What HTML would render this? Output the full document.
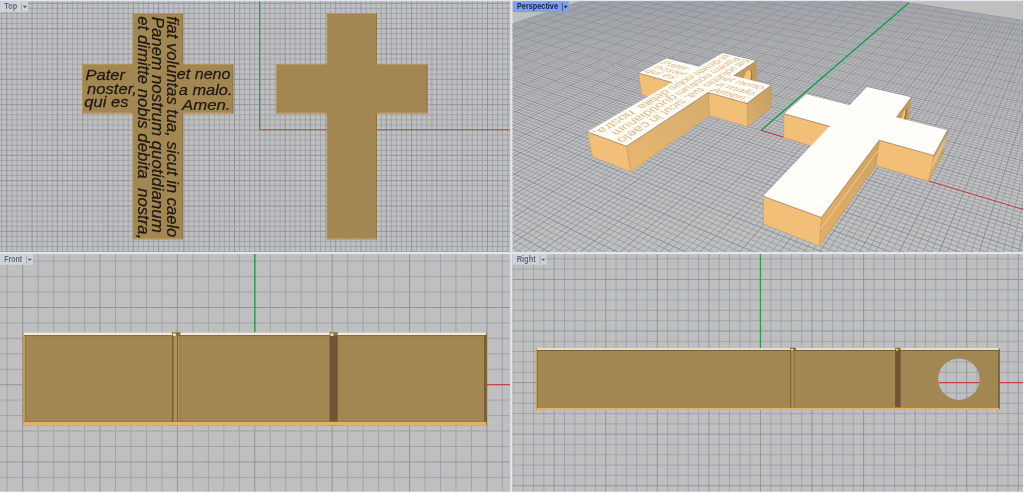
<!DOCTYPE html>
<html><head><meta charset="utf-8"><title>Rhino viewports</title>
<style>html,body{margin:0;padding:0;background:#fff}body{width:1024px;height:494px;overflow:hidden;position:relative}</style>
</head><body>
<svg width="1024" height="494" viewBox="0 0 1024 494" style="position:absolute;left:0;top:0;filter:blur(0.35px)"><defs>
<clipPath id="ct"><rect x="0" y="1.2" width="510.2" height="250.8"/></clipPath>
<clipPath id="cp"><rect x="512.5" y="1.2" width="510.5" height="250.8"/></clipPath>
<clipPath id="cf"><rect x="0" y="254.1" width="510.2" height="237.6"/></clipPath>
<clipPath id="cr"><rect x="512.5" y="254.1" width="510.5" height="237.6"/></clipPath>
<linearGradient id="gR1" x1="0" y1="1" x2="1" y2="0"><stop offset="0" stop-color="#e9b76b"/><stop offset="0.5" stop-color="#deb270"/><stop offset="1" stop-color="#d6ac6c"/></linearGradient>
<linearGradient id="gR1b" x1="0" y1="1" x2="1" y2="0"><stop offset="0" stop-color="#e3af65"/><stop offset="0.5" stop-color="#daa963"/><stop offset="1" stop-color="#d2a360"/></linearGradient>
<linearGradient id="gR2" x1="0" y1="1" x2="1" y2="0"><stop offset="0" stop-color="#deb06a"/><stop offset="1" stop-color="#c49d62"/></linearGradient>
</defs>
<rect x="0" y="0" width="1024" height="494" fill="#ffffff"/>
<rect x="0" y="0" width="1023" height="491.7" fill="#e2e6ef"/>
<rect x="0" y="1.2" width="510.2" height="250.8" fill="#bfbfbf"/>
<rect x="512.5" y="1.2" width="510.5" height="250.8" fill="#bfbfbf"/>
<rect x="0" y="254.1" width="510.2" height="237.6" fill="#bfbfbf"/>
<rect x="512.5" y="254.1" width="510.5" height="237.6" fill="#bfbfbf"/>
<g clip-path="url(#ct)">
<path d="M1.74 1.2V252M11.86 1.2V252M16.92 1.2V252M21.98 1.2V252M27.04 1.2V252M37.16 1.2V252M42.22 1.2V252M47.28 1.2V252M52.34 1.2V252M62.46 1.2V252M67.52 1.2V252M72.58 1.2V252M77.64 1.2V252M87.76 1.2V252M92.82 1.2V252M97.88 1.2V252M102.94 1.2V252M113.06 1.2V252M118.12 1.2V252M123.18 1.2V252M128.24 1.2V252M138.36 1.2V252M143.42 1.2V252M148.48 1.2V252M153.54 1.2V252M163.66 1.2V252M168.72 1.2V252M173.78 1.2V252M178.84 1.2V252M188.96 1.2V252M194.02 1.2V252M199.08 1.2V252M204.14 1.2V252M214.26 1.2V252M219.32 1.2V252M224.38 1.2V252M229.44 1.2V252M239.56 1.2V252M244.62 1.2V252M249.68 1.2V252M254.74 1.2V252M264.86 1.2V252M269.92 1.2V252M274.98 1.2V252M280.04 1.2V252M290.16 1.2V252M295.22 1.2V252M300.28 1.2V252M305.34 1.2V252M315.46 1.2V252M320.52 1.2V252M325.58 1.2V252M330.64 1.2V252M340.76 1.2V252M345.82 1.2V252M350.88 1.2V252M355.94 1.2V252M366.06 1.2V252M371.12 1.2V252M376.18 1.2V252M381.24 1.2V252M391.36 1.2V252M396.42 1.2V252M401.48 1.2V252M406.54 1.2V252M416.66 1.2V252M421.72 1.2V252M426.78 1.2V252M431.84 1.2V252M441.96 1.2V252M447.02 1.2V252M452.08 1.2V252M457.14 1.2V252M467.26 1.2V252M472.32 1.2V252M477.38 1.2V252M482.44 1.2V252M492.56 1.2V252M497.62 1.2V252M502.68 1.2V252M507.74 1.2V252M0 8.39H510.2M0 13.46H510.2M0 18.53H510.2M0 23.59H510.2M0 33.73H510.2M0 38.79H510.2M0 43.86H510.2M0 48.93H510.2M0 59.06H510.2M0 64.13H510.2M0 69.2H510.2M0 74.26H510.2M0 84.4H510.2M0 89.46H510.2M0 94.53H510.2M0 99.6H510.2M0 109.73H510.2M0 114.8H510.2M0 119.87H510.2M0 124.93H510.2M0 135.07H510.2M0 140.13H510.2M0 145.2H510.2M0 150.27H510.2M0 160.4H510.2M0 165.47H510.2M0 170.54H510.2M0 175.6H510.2M0 185.74H510.2M0 190.8H510.2M0 195.87H510.2M0 200.94H510.2M0 211.07H510.2M0 216.14H510.2M0 221.21H510.2M0 226.27H510.2M0 236.41H510.2M0 241.47H510.2M0 246.54H510.2M0 251.61H510.2" stroke="#949aa3" stroke-width="0.7" fill="none"/>
<path d="M6.8 1.2V252M32.1 1.2V252M57.4 1.2V252M82.7 1.2V252M108 1.2V252M133.3 1.2V252M158.6 1.2V252M183.9 1.2V252M209.2 1.2V252M234.5 1.2V252M259.8 1.2V252M285.1 1.2V252M310.4 1.2V252M335.7 1.2V252M361 1.2V252M386.3 1.2V252M411.6 1.2V252M436.9 1.2V252M462.2 1.2V252M487.5 1.2V252M0 3.32H510.2M0 28.66H510.2M0 54H510.2M0 79.33H510.2M0 104.66H510.2M0 130H510.2M0 155.34H510.2M0 180.67H510.2M0 206H510.2M0 231.34H510.2" stroke="#878d96" stroke-width="0.8" fill="none"/>
</g>
<g clip-path="url(#ct)">
<path d="M259.6 129.7V1.2" stroke="#1f9e55" stroke-width="1.3"/>
<path d="M259.6 129.7H510.2" stroke="#c0484a" stroke-width="1.1"/>
<path d="M132.6 238.9Q132.6 239.4 133.1 239.4L182.25 239.4Q182.75 239.4 182.75 238.9L182.75 114.9Q182.75 113.5 184.15 113.5L232.7 113.5Q233.2 113.5 233.2 113L233.2 64.6Q233.2 64.1 232.7 64.1L184.15 64.1Q182.75 64.1 182.75 62.7L182.75 13.7Q182.75 13.2 182.25 13.2L133.1 13.2Q132.6 13.2 132.6 13.7L132.6 62.7Q132.6 64.1 131.2 64.1L82.5 64.1Q82 64.1 82 64.6L82 113Q82 113.5 82.5 113.5L131.2 113.5Q132.6 113.5 132.6 114.9Z" fill="#a38753"/>
<path d="M82.5 113.1H131.4" stroke="#cda560" stroke-width="0.9"/>
<path d="M183.95 113.1H232.7" stroke="#cda560" stroke-width="0.9"/>
<path d="M133.1 239H182.25" stroke="#cda560" stroke-width="0.9"/>
<path d="M232.8 64.6V113" stroke="#8a7142" stroke-width="0.9"/>
<path d="M182.35 13.7V62.9" stroke="#8a7142" stroke-width="0.9"/>
<path d="M182.35 114.7V238.9" stroke="#8a7142" stroke-width="0.9"/>
<path d="M82.4 64.6V113" stroke="#b8975b" stroke-width="0.8"/>
<path d="M133 13.7V62.9" stroke="#b8975b" stroke-width="0.8"/>
<path d="M133 114.7V238.9" stroke="#b8975b" stroke-width="0.8"/>
<path d="M82.5 64.5H131.4" stroke="#b8975b" stroke-width="0.8"/>
<path d="M183.95 64.5H232.7" stroke="#b8975b" stroke-width="0.8"/>
<path d="M133.1 13.6H182.25" stroke="#b8975b" stroke-width="0.8"/>
<path d="M326.8 238.9Q326.8 239.4 327.3 239.4L376.3 239.4Q376.8 239.4 376.8 238.9L376.8 114.9Q376.8 113.5 378.2 113.5L427 113.5Q427.5 113.5 427.5 113L427.5 64.6Q427.5 64.1 427 64.1L378.2 64.1Q376.8 64.1 376.8 62.7L376.8 13.7Q376.8 13.2 376.3 13.2L327.3 13.2Q326.8 13.2 326.8 13.7L326.8 62.7Q326.8 64.1 325.4 64.1L276.7 64.1Q276.2 64.1 276.2 64.6L276.2 113Q276.2 113.5 276.7 113.5L325.4 113.5Q326.8 113.5 326.8 114.9Z" fill="#a38753"/>
<path d="M276.7 113.1H325.6" stroke="#cda560" stroke-width="0.9"/>
<path d="M378 113.1H427" stroke="#cda560" stroke-width="0.9"/>
<path d="M327.3 239H376.3" stroke="#cda560" stroke-width="0.9"/>
<path d="M427.1 64.6V113" stroke="#8a7142" stroke-width="0.9"/>
<path d="M376.4 13.7V62.9" stroke="#8a7142" stroke-width="0.9"/>
<path d="M376.4 114.7V238.9" stroke="#8a7142" stroke-width="0.9"/>
<path d="M276.6 64.6V113" stroke="#b8975b" stroke-width="0.8"/>
<path d="M327.2 13.7V62.9" stroke="#b8975b" stroke-width="0.8"/>
<path d="M327.2 114.7V238.9" stroke="#b8975b" stroke-width="0.8"/>
<path d="M276.7 64.5H325.6" stroke="#b8975b" stroke-width="0.8"/>
<path d="M378 64.5H427" stroke="#b8975b" stroke-width="0.8"/>
<path d="M327.3 13.6H376.3" stroke="#b8975b" stroke-width="0.8"/>
<g style="font-family:'Liberation Sans',Arial,sans-serif;font-style:italic;font-size:15.5px;fill:#1e1a12;stroke:#1e1a12;stroke-width:0.25">
<text transform="translate(85.4 80.2) scale(1.0700 1)" style="font-size:15.5px" xml:space="preserve">Pater</text>
<text transform="translate(87.1 93.8) scale(1.0700 1)" style="font-size:15.5px" xml:space="preserve">noster,</text>
<text transform="translate(84.2 107.2) scale(1.0700 1)" style="font-size:15.5px" xml:space="preserve">qui es</text>
<text transform="translate(176.8 79.3) scale(1.0400 1)" style="font-size:15.5px" xml:space="preserve">et neno</text>
<text transform="translate(178.8 95.4) scale(1.0580 1)" style="font-size:15.5px" xml:space="preserve">a malo.</text>
<text transform="translate(182.0 110.1) scale(1.0830 1)" style="font-size:15.5px" xml:space="preserve">Amen.</text>
<text transform="translate(166.6 16.3) rotate(90) scale(1.0238 1)" style="font-size:16.2px" xml:space="preserve">fiat voluntas tua, sicut in caelo</text>
<text transform="translate(152.4 16.7) rotate(90) scale(1.0439 1)" style="font-size:16.2px" xml:space="preserve">Panem nostrum quotidianum</text>
<text transform="translate(137.6 16.3) rotate(90) scale(1.0324 1)" style="font-size:16.2px" xml:space="preserve">et dimitte nobis debita  nostra,</text>
</g>
</g>
<rect x="0" y="1.2" width="28" height="10.8" fill="#ced3da"/>
<text x="4.2" y="9.2" style="font-family:'Liberation Sans',sans-serif;font-size:8.6px;font-weight:bold;fill:#666b73" textLength="13" lengthAdjust="spacingAndGlyphs">Top</text>
<path d="M21.6 2.7V11" stroke="#9a9fa8" stroke-width="0.8"/>
<path d="M22.8 5.8H26.8L24.8 8.2Z" fill="#55595f"/>
<g clip-path="url(#cf)">
<path d="M7.2 254.1V491.7M38.15 254.1V491.7M53.63 254.1V491.7M69.1 254.1V491.7M84.58 254.1V491.7M115.53 254.1V491.7M131 254.1V491.7M146.48 254.1V491.7M161.95 254.1V491.7M192.9 254.1V491.7M208.38 254.1V491.7M223.85 254.1V491.7M239.33 254.1V491.7M270.28 254.1V491.7M285.75 254.1V491.7M301.23 254.1V491.7M316.7 254.1V491.7M347.65 254.1V491.7M363.12 254.1V491.7M378.6 254.1V491.7M394.08 254.1V491.7M425.02 254.1V491.7M440.5 254.1V491.7M455.98 254.1V491.7M471.45 254.1V491.7M502.4 254.1V491.7M0 261.18H510.2M0 276.62H510.2M0 292.06H510.2M0 322.94H510.2M0 338.38H510.2M0 353.82H510.2M0 369.26H510.2M0 400.14H510.2M0 415.58H510.2M0 431.02H510.2M0 446.46H510.2M0 477.34H510.2" stroke="#949aa3" stroke-width="0.7" fill="none"/>
<path d="M22.68 254.1V491.7M100.05 254.1V491.7M177.43 254.1V491.7M254.8 254.1V491.7M332.18 254.1V491.7M409.55 254.1V491.7M486.93 254.1V491.7M0 307.5H510.2M0 384.7H510.2M0 461.9H510.2" stroke="#878d96" stroke-width="0.8" fill="none"/>
</g>
<g clip-path="url(#cf)">
<path d="M254.8 384.6V254.1" stroke="#1f9e55" stroke-width="1.3"/>
<path d="M254.8 384.6H510.2" stroke="#c0484a" stroke-width="1.1"/>
<rect x="22.8" y="332.6" width="464" height="92.8" rx="1.2" fill="#a38753"/>
<rect x="22.8" y="333.6" width="2.6" height="90.8" fill="#c29a52"/>
<rect x="25.4" y="333.6" width="0.8" height="90.8" fill="#8d7443"/>
<rect x="484.1" y="333.6" width="2.7" height="90.8" fill="#755c35"/>
<rect x="171.9" y="332.6" width="8.5" height="92.8" fill="#b29158"/>
<rect x="171.9" y="332.6" width="1.7" height="92.8" fill="#7b6139"/>
<rect x="177" y="332.6" width="0.85" height="92.8" fill="#6f5733"/>
<rect x="179.55" y="332.6" width="0.85" height="92.8" fill="#8d7443"/>
<rect x="329.5" y="332.6" width="8.2" height="92.8" fill="#6e5632"/>
<rect x="23.6" y="332.6" width="462.4" height="2.7" rx="0.8" fill="#f1ede0"/>
<rect x="24.3" y="335.3" width="461" height="0.8" fill="#6d5631"/>
<rect x="24.3" y="421.4" width="461" height="0.7" fill="#8d7443"/>
<rect x="23.4" y="422" width="462.8" height="3.4" rx="1" fill="#e3b266"/>
<rect x="171.9" y="332.2" width="8.5" height="3.3" fill="#8a7040"/>
<rect x="172.7" y="333.2" width="3.4" height="2.7" rx="1" fill="#f4d98a"/>
<rect x="329.5" y="332.2" width="8.2" height="3.3" fill="#8a7040"/>
<rect x="330.3" y="333.2" width="3.28" height="2.7" rx="1" fill="#f4d98a"/>
</g>
<rect x="0" y="254.1" width="33" height="10.7" fill="#ced3da"/>
<text x="4.2" y="262.1" style="font-family:'Liberation Sans',sans-serif;font-size:8.6px;font-weight:bold;fill:#666b73" textLength="18" lengthAdjust="spacingAndGlyphs">Front</text>
<path d="M26.6 255.6V263.8" stroke="#9a9fa8" stroke-width="0.8"/>
<path d="M27.8 258.7H31.8L29.8 261.1Z" fill="#55595f"/>
<g clip-path="url(#cr)">
<path d="M512.89 254.1V491.7M523.21 254.1V491.7M533.52 254.1V491.7M543.84 254.1V491.7M564.47 254.1V491.7M574.78 254.1V491.7M585.1 254.1V491.7M595.41 254.1V491.7M616.04 254.1V491.7M626.36 254.1V491.7M636.67 254.1V491.7M646.99 254.1V491.7M667.62 254.1V491.7M677.93 254.1V491.7M688.25 254.1V491.7M698.56 254.1V491.7M719.19 254.1V491.7M729.5 254.1V491.7M739.82 254.1V491.7M750.13 254.1V491.7M770.77 254.1V491.7M781.08 254.1V491.7M791.4 254.1V491.7M801.71 254.1V491.7M822.34 254.1V491.7M832.66 254.1V491.7M842.97 254.1V491.7M853.29 254.1V491.7M873.92 254.1V491.7M884.23 254.1V491.7M894.55 254.1V491.7M904.86 254.1V491.7M925.49 254.1V491.7M935.81 254.1V491.7M946.12 254.1V491.7M956.44 254.1V491.7M977.07 254.1V491.7M987.38 254.1V491.7M997.7 254.1V491.7M1008.01 254.1V491.7M512.5 258.82H1023M512.5 269.14H1023M512.5 289.77H1023M512.5 300.08H1023M512.5 310.4H1023M512.5 320.71H1023M512.5 341.34H1023M512.5 351.66H1023M512.5 361.97H1023M512.5 372.29H1023M512.5 392.92H1023M512.5 403.23H1023M512.5 413.55H1023M512.5 423.86H1023M512.5 444.49H1023M512.5 454.81H1023M512.5 465.12H1023M512.5 475.44H1023" stroke="#949aa3" stroke-width="0.7" fill="none"/>
<path d="M554.15 254.1V491.7M605.73 254.1V491.7M657.3 254.1V491.7M708.88 254.1V491.7M760.45 254.1V491.7M812.03 254.1V491.7M863.6 254.1V491.7M915.18 254.1V491.7M966.75 254.1V491.7M1018.33 254.1V491.7M512.5 279.45H1023M512.5 331.03H1023M512.5 382.6H1023M512.5 434.18H1023M512.5 485.75H1023" stroke="#878d96" stroke-width="0.8" fill="none"/>
</g>
<g clip-path="url(#cr)">
<path d="M760.45 382.6V254.1" stroke="#1f9e55" stroke-width="1.3"/>
<path d="M760.45 382.6H1023" stroke="#c0484a" stroke-width="1.1"/>
<mask id="hole"><rect x="500" y="300" width="540" height="150" fill="#fff"/><circle cx="958.85" cy="379.2" r="20.7" fill="#000"/></mask>
<g mask="url(#hole)">
<rect x="535.9" y="348.1" width="463.8" height="61.8" rx="1.2" fill="#a38753"/>
<rect x="535.9" y="349.1" width="1.3" height="59.8" fill="#c29a52"/>
<rect x="537.2" y="349.1" width="0.8" height="59.8" fill="#8d7443"/>
<rect x="998.1" y="349.1" width="1.6" height="59.8" fill="#755c35"/>
<rect x="790.1" y="348.1" width="6" height="61.8" fill="#b29158"/>
<rect x="790.1" y="348.1" width="1.2" height="61.8" fill="#7b6139"/>
<rect x="793.7" y="348.1" width="0.7" height="61.8" fill="#6f5733"/>
<rect x="795.5" y="348.1" width="0.6" height="61.8" fill="#8d7443"/>
<rect x="895.1" y="348.1" width="5.5" height="61.8" fill="#6e5632"/>
<rect x="536.7" y="348.1" width="462.2" height="1.9" rx="0.8" fill="#e6dfca"/>
<rect x="537.4" y="350" width="460.8" height="0.8" fill="#6d5631"/>
<rect x="537.4" y="407.2" width="460.8" height="0.7" fill="#8d7443"/>
<rect x="536.5" y="407.8" width="462.6" height="2.1" rx="1" fill="#e3b266"/>
<rect x="790.1" y="347.7" width="6" height="2.5" fill="#8a7040"/>
<rect x="790.9" y="348.7" width="2.4" height="1.9" rx="1" fill="#f4d98a"/>
<rect x="895.1" y="347.7" width="5.5" height="2.5" fill="#8a7040"/>
<rect x="895.9" y="348.7" width="2.2" height="1.9" rx="1" fill="#f4d98a"/>
</g>
</g>
<rect x="512.5" y="254.1" width="34" height="10.5" fill="#ced3da"/>
<text x="516.7" y="262.1" style="font-family:'Liberation Sans',sans-serif;font-size:8.6px;font-weight:bold;fill:#666b73" textLength="19" lengthAdjust="spacingAndGlyphs">Right</text>
<path d="M540.1 255.6V263.6" stroke="#9a9fa8" stroke-width="0.8"/>
<path d="M541.3 258.7H545.3L543.3 261.1Z" fill="#55595f"/>
<g clip-path="url(#cp)">
<defs><path id="gmn" d="M-201.19 262.64L683.42 -31.73M-188.24 255.65L-620.38 -2633.31M-200.88 265.27L685.26 -31.45M-175.23 251.35L-726.11 -2783M-200.57 267.93L687.11 -31.17M-162.49 247.13L-845.55 -2952.1M-200.25 270.63L688.96 -30.88M-150 243L-981.56 -3144.66M-199.61 276.12L692.69 -30.31M-125.73 234.97L-1319.28 -3622.81M-199.28 278.92L694.56 -30.02M-113.94 231.08L-1532.5 -3924.68M-198.95 281.75L696.45 -29.73M-102.37 227.25L-1786.66 -4284.51M-198.61 284.62L698.34 -29.44M-91.02 223.5L-2094.77 -4720.74M-197.92 290.47L702.14 -28.86M-68.94 216.19L-2960.17 -5945.97M-197.57 293.45L704.05 -28.57M-58.2 212.64L-3595.09 -6844.88M-197.22 296.46L705.97 -28.27M-47.65 209.15L-4464.33 -8075.54M-196.86 299.52L707.9 -27.97M-37.29 205.73L-5726.94 -9863.14M-196.12 305.75L711.78 -27.38M-17.11 199.06L-11383.49 -17871.62M-195.75 308.93L713.73 -27.08M-7.29 195.81L-20189.79 -30339.5M-195.37 312.15L715.69 -26.78M2.37 192.61L-70997.59 -102272.74M-194.99 315.42L717.66 -26.48M11.86 189.47L53192.59 73554.61M-194.2 322.08L721.62 -25.87M30.36 183.35L12833.26 16414.23M-193.8 325.47L723.61 -25.56M39.38 180.37L9560.77 11781.08M-193.4 328.92L725.61 -25.25M48.26 177.44L7717.11 9170.84M-192.99 332.41L727.62 -24.95M56.99 174.55L6534.19 7496.06M-192.15 339.54L731.66 -24.32M74.02 168.92L5104.6 5472.07M-191.72 343.19L733.69 -24.01M82.33 166.17L4639.72 4813.89M-191.29 346.88L735.74 -23.7M90.51 163.46L4271.88 4293.11M-190.84 350.63L737.79 -23.38M98.57 160.8L3973.57 3870.77M-189.94 358.28L741.91 -22.75M114.3 155.59L3519.23 3227.51M-189.48 362.2L743.99 -22.43M121.98 153.05L3342.24 2976.93M-189.02 366.17L746.07 -22.11M129.55 150.55L3189.52 2760.72M-188.54 370.2L748.17 -21.79M137.01 148.09L3056.41 2572.27M-187.57 378.44L752.38 -21.14M151.58 143.27L2835.62 2259.67M-187.08 382.65L754.5 -20.82M158.71 140.91L2743.05 2128.61M-186.57 386.93L756.63 -20.49M165.73 138.59L2659.93 2010.93M-186.06 391.28L758.76 -20.16M172.65 136.3L2584.9 1904.69M-185.02 400.17L763.07 -19.5M186.18 131.82L2454.76 1720.45M-184.48 404.73L765.23 -19.17M192.81 129.63L2397.97 1640.04M-183.94 409.35L767.41 -18.83M199.34 127.47L2345.8 1566.18M-183.38 414.05L769.59 -18.5M205.78 125.34L2297.7 1498.09M-182.25 423.68L773.99 -17.82M218.39 121.17L2211.98 1376.73M-181.67 428.62L776.2 -17.48M224.57 119.13L2173.62 1322.42M-181.08 433.64L778.42 -17.14M230.66 117.11L2137.85 1271.78M-180.48 438.74L780.65 -16.8M236.67 115.13L2104.43 1224.45M-179.25 449.2L785.14 -16.11M248.44 111.23L2043.72 1138.51M-178.62 454.56L787.4 -15.76M254.21 109.32L2016.09 1099.38M-177.98 460.02L789.67 -15.41M259.9 107.44L1990.04 1062.51M-177.32 465.58L791.95 -15.06M265.52 105.58L1965.47 1027.71M-175.98 476.98L796.54 -14.36M276.54 101.94L1920.24 963.68M-175.29 482.84L798.85 -14M281.94 100.15L1899.38 934.15M-174.59 488.8L801.17 -13.65M287.28 98.39L1879.58 906.11M-173.88 494.87L803.5 -13.29M292.54 96.65L1860.75 879.46M-172.41 507.35L808.2 -12.57M302.88 93.23L1825.75 829.91M-171.66 513.76L810.56 -12.2M307.95 91.55L1809.46 806.83M-170.89 520.3L812.93 -11.84M312.96 89.9L1793.89 784.8M-170.1 526.96L815.31 -11.47M317.9 88.26L1779.01 763.73M-168.49 540.68L820.11 -10.74M327.61 85.05L1751.12 724.25M-167.66 547.74L822.53 -10.37M332.38 83.47L1738.04 705.73M-166.81 554.94L824.95 -9.99M337.09 81.92L1725.49 687.95M-165.95 562.29L827.39 -9.62M341.74 80.38L1713.43 670.88M-164.17 577.43L832.3 -8.86M350.89 77.35L1690.69 638.69M-163.25 585.24L834.77 -8.49M355.38 75.87L1679.96 623.49M-162.31 593.21L837.25 -8.1M359.81 74.4L1669.62 608.85M-161.35 601.35L839.75 -7.72M364.2 72.95L1659.65 594.74M-159.37 618.16L844.77 -6.95M372.82 70.1L1640.75 567.98M-158.35 626.84L847.29 -6.56M377.06 68.7L1631.79 555.29M-157.31 635.72L849.83 -6.17M381.25 67.31L1623.12 543.02M-156.24 644.79L852.39 -5.78M385.39 65.94L1614.74 531.16M-154.04 663.55L857.52 -4.99M393.54 63.25L1598.79 508.58M-152.89 673.26L860.11 -4.59M397.54 61.92L1591.19 497.82M-151.73 683.2L862.71 -4.19M401.5 60.61L1583.83 487.39M-150.53 693.37L865.32 -3.79M405.42 59.32L1576.69 477.28M-148.05 714.45L870.58 -2.98M413.13 56.77L1563.04 457.96M-146.76 725.38L873.23 -2.58M416.92 55.51L1556.52 448.72M-145.45 736.58L875.89 -2.17M420.67 54.27L1550.18 439.75M-144.1 748.06L878.56 -1.76M424.38 53.05L1544.02 431.03M-141.29 771.91L883.95 -0.93M431.68 50.63L1532.22 414.32M-139.83 784.31L886.66 -0.51M435.28 49.44L1526.55 406.3M-138.34 797.03L889.38 -0.1M438.83 48.27L1521.04 398.5M-136.8 810.1L892.12 0.32M442.35 47.1L1515.68 390.91M-133.6 837.31L897.64 1.17M449.28 44.81L1505.36 376.3M-131.93 851.49L900.41 1.6M452.69 43.68L1500.4 369.28M-130.21 866.07L903.21 2.03M456.07 42.57L1495.57 362.44M-128.45 881.07L906.01 2.46M459.41 41.46L1490.85 355.76M-124.76 912.41L911.66 3.33M466 39.28L1481.76 342.89M-122.84 928.79L914.51 3.76M469.24 38.21L1477.38 336.69M-120.85 945.66L917.37 4.2M472.45 37.15L1473.11 330.63M-118.81 963.06L920.24 4.64M475.63 36.1L1468.93 324.72M-114.52 999.54L926.03 5.53M481.9 34.03L1460.86 313.29M-112.27 1018.67L928.95 5.98M484.98 33L1456.96 307.78M-109.94 1038.43L931.88 6.43M488.04 31.99L1453.15 302.38M-107.54 1058.85L934.82 6.88M491.07 30.99L1449.42 297.1M-102.48 1101.83L940.76 7.8M497.04 29.02L1442.21 286.89M-99.82 1124.47L943.75 8.26M499.98 28.05L1438.72 281.95M-97.06 1147.92L946.75 8.72M502.89 27.08L1435.31 277.11M-94.2 1172.23L949.77 9.18M505.78 26.13L1431.96 272.38M-88.16 1223.64L955.86 10.12M511.47 24.25L1425.48 263.2M-84.96 1250.84L958.93 10.59M514.28 23.32L1422.33 258.75M-81.63 1279.12L962.01 11.06M517.06 22.4L1419.25 254.39M-78.17 1308.55L965.1 11.54M519.81 21.49L1416.23 250.11M-70.81 1371.12L971.35 12.49M525.24 19.69L1410.37 241.81M-66.89 1404.43L974.49 12.98M527.92 18.8L1407.53 237.78M-62.8 1439.2L977.65 13.46M530.58 17.93L1404.73 233.83M-58.53 1475.54L980.83 13.95M533.21 17.06L1402 229.95M-49.37 1553.36L987.24 14.94M538.4 15.34L1396.67 222.42M-44.46 1595.08L990.46 15.43M540.97 14.49L1394.08 218.75M-39.31 1638.87L993.71 15.93M543.51 13.65L1391.54 215.15M-33.9 1684.88L996.97 16.43M546.02 12.82L1389.04 211.62M-22.21 1784.28L1003.55 17.44M550.99 11.18L1384.19 204.74M-15.88 1838.07L1006.86 17.95M553.44 10.36L1381.82 201.39M-9.2 1894.89L1010.19 18.46M555.87 9.56L1379.5 198.1M-2.13 1955.02L1013.54 18.98M558.28 8.76L1377.21 194.87M13.33 2086.39L1020.29 20.01M563.04 7.19L1372.76 188.57M21.79 2158.34L1023.69 20.54M565.39 6.41L1370.6 185.5M30.81 2235.03L1027.11 21.06M567.72 5.64L1368.46 182.48M40.44 2316.92L1030.55 21.59M570.02 4.88L1366.37 179.51M61.81 2498.62L1037.48 22.65M574.58 3.37L1362.27 173.72M73.71 2599.78L1040.98 23.19M576.84 2.63L1360.28 170.89M86.55 2708.89L1044.49 23.73M579.07 1.89L1358.31 168.11M100.43 2826.93L1048.03 24.27M581.28 1.16L1356.38 165.37M131.92 3094.59L1055.15 25.37M585.66 -0.29L1352.61 160.03M149.86 3247.14L1058.74 25.92M587.82 -1L1350.76 157.42M169.56 3414.63L1062.35 26.47M589.96 -1.71L1348.95 154.85M191.29 3599.36L1065.98 27.03M592.09 -2.42L1347.16 152.32M242.22 4032.37L1073.31 28.16M596.29 -3.8L1343.67 147.37M272.34 4288.4L1077 28.72M598.36 -4.49L1341.96 144.96M306.36 4577.6L1080.71 29.29M600.42 -5.17L1340.28 142.58M345.09 4906.87L1084.44 29.87M602.46 -5.85L1338.62 140.23M441.24 5724.28L1091.97 31.03M606.5 -7.18L1335.38 135.64M501.92 6240.21L1095.77 31.61M608.49 -7.84L1333.79 133.39M574.24 6855.01L1099.59 32.19M610.47 -8.5L1332.23 131.18M661.88 7600.14L1103.43 32.78M612.43 -9.14L1330.69 129M907.9 9691.67L1111.17 33.97M616.31 -10.43L1327.67 124.73M1088.25 11224.94L1115.08 34.57M618.23 -11.06L1326.19 122.64M1334.97 13322.39L1119.01 35.18M620.14 -11.69L1324.74 120.57M1692.93 16365.61L1122.96 35.79M622.02 -12.32L1323.3 118.54M3290.75 29949.54L1130.93 37.01M625.76 -13.55L1320.49 114.55M5759.38 50936.74L1134.95 37.63M627.61 -14.16L1319.11 112.6M19567.58 168327.7L1139 38.25M629.44 -14.77L1317.75 110.67M-15537.61 -130120.59L1143.06 38.87M631.26 -15.37L1316.4 108.77M-3617.71 -28783.03L1151.27 40.13M634.85 -16.56L1313.77 105.05M-2673.71 -20757.58L1155.41 40.77M636.63 -17.15L1312.48 103.22M-2143.33 -16248.52L1159.57 41.41M638.4 -17.73L1311.21 101.42M-1803.58 -13360.09L1163.76 42.05M640.15 -18.31L1309.95 99.64M-1393.55 -9874.23L1172.21 43.35M643.62 -19.46L1307.48 96.14M-1260.35 -8741.82L1176.48 44.01M645.33 -20.02L1306.27 94.43M-1155 -7846.19L1180.77 44.67M647.03 -20.59L1305.08 92.74M-1069.6 -7120.12L1185.08 45.33M648.72 -21.15L1303.9 91.07M-939.57 -6014.7L1193.79 46.67M652.07 -22.25L1301.58 87.79M-888.94 -5584.23L1198.19 47.34M653.72 -22.8L1300.44 86.18M-845.25 -5212.87L1202.61 48.02M655.36 -23.34L1299.32 84.59M-807.19 -4889.23L1207.06 48.7M656.99 -23.88L1298.21 83.02M-744.05 -4352.51L1216.04 50.08M660.22 -24.95L1296.03 79.93M-717.59 -4127.51L1220.57 50.78M661.82 -25.48L1294.96 78.42M-693.83 -3925.52L1225.13 51.48M663.4 -26L1293.9 76.92M-672.38 -3743.16L1229.71 52.18M664.97 -26.52L1292.86 75.44M-635.18 -3426.95L1238.97 53.61M668.09 -27.55L1290.8 72.53M-618.95 -3288.97L1243.65 54.32M669.63 -28.06L1289.79 71.1M-604.05 -3162.23L1248.35 55.05M671.16 -28.57L1288.8 69.69M-590.3 -3045.4L1253.08 55.77M672.68 -29.07L1287.81 68.29M-565.81 -2837.17L1262.64 57.24M675.69 -30.07L1285.87 65.55M-554.85 -2743.99L1267.46 57.98M677.18 -30.56L1284.92 64.2M-544.63 -2657.12L1272.32 58.73M678.66 -31.05L1283.97 62.86M-535.08 -2575.92L1277.2 59.48M680.13 -31.53L1283.04 61.54"/><path id="gmj" d="M-201.5 260.03L681.59 -32.02M-201.5 260.03L-526.14 -2499.88M-199.93 273.36L690.82 -30.6M-137.74 238.95L-1137.84 -3365.92M-198.27 287.53L700.23 -29.15M-79.87 219.81L-2476.08 -5260.59M-196.49 302.62L709.84 -27.68M-27.11 202.36L-7728.07 -12696.32M-194.6 318.72L719.64 -26.17M21.19 186.39L20246.37 26909.66M-192.57 335.95L729.64 -24.64M65.57 171.71L5710.77 6330.28M-190.4 354.43L739.85 -23.07M106.49 158.18L3726.78 3521.37M-188.06 374.29L750.27 -21.47M144.35 145.66L2939.36 2406.54M-185.54 395.69L760.91 -19.83M179.46 134.04L2516.81 1808.3M-182.82 418.83L771.78 -18.16M212.13 123.24L2253.23 1435.13M-179.87 443.92L782.89 -16.45M242.59 113.17L2073.11 1180.12M-176.66 471.23L794.24 -14.71M271.07 103.75L1942.23 994.82M-173.15 501.05L805.85 -12.93M297.74 94.93L1842.83 854.09M-169.3 533.76L817.71 -11.11M322.79 86.65L1764.77 743.57M-165.07 569.78L829.84 -9.24M346.34 78.86L1701.84 654.47M-160.37 609.67L842.25 -7.34M368.54 71.52L1650.03 581.12M-155.15 654.06L854.95 -5.39M389.49 64.59L1606.64 519.69M-149.3 703.78L867.94 -3.39M409.29 58.04L1569.76 467.48M-142.71 759.83L881.25 -1.35M428.05 51.83L1538.04 422.56M-135.22 823.52L894.87 0.75M445.83 45.95L1510.45 383.51M-126.63 896.51L908.83 2.89M462.72 40.37L1486.25 349.25M-116.69 981.01L923.13 5.09M478.78 35.06L1464.85 318.94M-105.05 1079.97L937.78 7.34M494.07 30L1445.78 291.94M-91.24 1197.45L952.81 9.65M508.64 25.18L1428.68 267.74M-74.56 1339.19L968.22 12.01M522.54 20.58L1413.27 245.92M-54.05 1513.56L984.03 14.44M535.82 16.19L1399.31 226.15M-28.21 1733.29L1000.25 16.93M548.52 11.99L1386.59 208.15M5.37 2018.74L1016.9 19.49M560.67 7.97L1374.97 191.69M50.75 2404.57L1034.01 22.12M572.31 4.12L1364.3 176.59M115.5 2955.05L1051.58 24.82M583.48 0.43L1354.48 162.68M215.38 3804.12L1069.63 27.59M594.19 -3.11L1345.4 149.83M389.58 5285.16L1088.2 30.45M604.49 -6.52L1336.99 137.92M770.31 8521.93L1107.29 33.38M614.38 -9.79L1329.17 126.85M2259.29 21180.53L1126.93 36.4M623.9 -12.94L1321.88 116.53M-5768.41 -47067.27L1147.15 39.5M633.06 -15.97L1315.08 106.9M-1567.33 -11351.66L1167.98 42.7M641.89 -18.89L1308.71 97.88M-998.96 -6519.62L1189.43 46M650.4 -21.7L1302.73 89.42M-773.71 -4604.67L1211.53 49.39M658.61 -24.42L1297.11 81.47M-652.92 -3577.73L1234.33 52.89M666.54 -27.04L1291.82 73.98M-577.6 -2937.37L1257.85 56.51M674.19 -29.57L1286.83 66.91M-526.14 -2499.88L1282.12 60.23M681.59 -32.02L1282.12 60.23"/></defs>
<clipPath id="pb0"><rect x="512.5" y="1.2" width="510.5" height="25.08"/></clipPath>
<g clip-path="url(#pb0)" fill="none"><use href="#gmn" stroke="#868c95" stroke-width="0.402"/><use href="#gmj" stroke="#777d86" stroke-width="0.568"/></g>
<clipPath id="pb1"><rect x="512.5" y="26.28" width="510.5" height="25.08"/></clipPath>
<g clip-path="url(#pb1)" fill="none"><use href="#gmn" stroke="#868c95" stroke-width="0.424"/><use href="#gmj" stroke="#777d86" stroke-width="0.583"/></g>
<clipPath id="pb2"><rect x="512.5" y="51.36" width="510.5" height="25.08"/></clipPath>
<g clip-path="url(#pb2)" fill="none"><use href="#gmn" stroke="#868c95" stroke-width="0.448"/><use href="#gmj" stroke="#777d86" stroke-width="0.598"/></g>
<clipPath id="pb3"><rect x="512.5" y="76.44" width="510.5" height="25.08"/></clipPath>
<g clip-path="url(#pb3)" fill="none"><use href="#gmn" stroke="#868c95" stroke-width="0.471"/><use href="#gmj" stroke="#777d86" stroke-width="0.613"/></g>
<clipPath id="pb4"><rect x="512.5" y="101.52" width="510.5" height="25.08"/></clipPath>
<g clip-path="url(#pb4)" fill="none"><use href="#gmn" stroke="#868c95" stroke-width="0.494"/><use href="#gmj" stroke="#777d86" stroke-width="0.628"/></g>
<clipPath id="pb5"><rect x="512.5" y="126.6" width="510.5" height="25.08"/></clipPath>
<g clip-path="url(#pb5)" fill="none"><use href="#gmn" stroke="#868c95" stroke-width="0.517"/><use href="#gmj" stroke="#777d86" stroke-width="0.643"/></g>
<clipPath id="pb6"><rect x="512.5" y="151.68" width="510.5" height="25.08"/></clipPath>
<g clip-path="url(#pb6)" fill="none"><use href="#gmn" stroke="#868c95" stroke-width="0.540"/><use href="#gmj" stroke="#777d86" stroke-width="0.658"/></g>
<clipPath id="pb7"><rect x="512.5" y="176.76" width="510.5" height="25.08"/></clipPath>
<g clip-path="url(#pb7)" fill="none"><use href="#gmn" stroke="#868c95" stroke-width="0.562"/><use href="#gmj" stroke="#777d86" stroke-width="0.673"/></g>
<clipPath id="pb8"><rect x="512.5" y="201.84" width="510.5" height="25.08"/></clipPath>
<g clip-path="url(#pb8)" fill="none"><use href="#gmn" stroke="#868c95" stroke-width="0.586"/><use href="#gmj" stroke="#777d86" stroke-width="0.688"/></g>
<clipPath id="pb9"><rect x="512.5" y="226.92" width="510.5" height="25.08"/></clipPath>
<g clip-path="url(#pb9)" fill="none"><use href="#gmn" stroke="#868c95" stroke-width="0.609"/><use href="#gmj" stroke="#777d86" stroke-width="0.703"/></g>
<path d="M761.08 130.4L908.83 2.89" stroke="#1f9e55" stroke-width="1.5"/>
<path d="M761.08 130.4L1486.25 349.25" stroke="#c0484a" stroke-width="1.1"/>
<path d="M734.43 97.61L756.38 81.88L756.11 60.91L733.62 75.7Z" fill="#c39a59" stroke="#b98f52" stroke-width="0.4" stroke-linejoin="round"/>
<clipPath id="h353"><path d="M752.17 74.84L751.99 73.02L751.53 71.51L750.82 70.42L749.89 69.83L748.82 69.78L747.68 70.29L746.54 71.31L745.48 72.79L744.58 74.63L743.91 76.68L743.51 78.82L743.41 80.88L743.62 82.72L744.11 84.21L744.85 85.26L745.8 85.8L746.87 85.79L748.01 85.24L749.12 84.19L750.15 82.72L751.01 80.93L751.66 78.93L752.06 76.86Z"/></clipPath>
<path d="M752.17 74.84L751.99 73.02L751.53 71.51L750.82 70.42L749.89 69.83L748.82 69.78L747.68 70.29L746.54 71.31L745.48 72.79L744.58 74.63L743.91 76.68L743.51 78.82L743.41 80.88L743.62 82.72L744.11 84.21L744.85 85.26L745.8 85.8L746.87 85.79L748.01 85.24L749.12 84.19L750.15 82.72L751.01 80.93L751.66 78.93L752.06 76.86Z" fill="#8f6f3e"/>
<path clip-path="url(#h353)" d="M751.14 74.58L750.96 72.76L750.49 71.26L749.78 70.17L748.85 69.58L747.78 69.53L746.63 70.03L745.49 71.05L744.43 72.53L743.53 74.36L742.86 76.42L742.46 78.55L742.36 80.61L742.57 82.45L743.06 83.94L743.81 84.99L744.76 85.53L745.84 85.52L746.97 84.97L748.09 83.93L749.11 82.46L749.98 80.67L750.63 78.67L751.03 76.6Z" fill="#f0c27c"/>
<path d="M747.62 126.87L770.93 107.71L771 85.23L747.07 103.34Z" fill="url(#gR2)" stroke="#b98f52" stroke-width="0.4" stroke-linejoin="round"/>
<path d="M709.63 115.38L747.62 126.87L747.07 103.34L708.12 92.48Z" fill="#f1bf78" stroke="#b98f52" stroke-width="0.4" stroke-linejoin="round"/>
<path d="M641.7 94.85L674.43 104.74L672.09 82.43L638.67 73.1Z" fill="#f1bf78" stroke="#b98f52" stroke-width="0.4" stroke-linejoin="round"/>
<path d="M630.76 171.91L709.63 115.38L708.12 92.48L626.49 146.17Z" fill="url(#gR1)" stroke="#b98f52" stroke-width="0.4" stroke-linejoin="round"/>
<path d="M592.43 156.83L630.76 171.91L626.49 146.17L587.22 131.8Z" fill="#f1bf78" stroke="#b98f52" stroke-width="0.4" stroke-linejoin="round"/>
<path d="M587.22 131.8L626.49 146.17L708.12 92.48L747.07 103.34L771 85.23L733.62 75.7L756.11 60.91L722.59 53.05L698.87 66.85L666.48 58.6L638.67 73.1L672.09 82.43Z" fill="#fffefb" />
<path d="M638.67 73.1L672.09 82.43" stroke="#6f5532" stroke-width="0.55" stroke-linecap="round" opacity="0.85"/>
<path d="M587.22 131.8L626.49 146.17" stroke="#6f5532" stroke-width="0.55" stroke-linecap="round" opacity="0.85"/>
<path d="M626.49 146.17L708.12 92.48" stroke="#6f5532" stroke-width="0.55" stroke-linecap="round" opacity="0.85"/>
<path d="M708.12 92.48L747.07 103.34" stroke="#6f5532" stroke-width="0.55" stroke-linecap="round" opacity="0.85"/>
<path d="M747.07 103.34L771 85.23" stroke="#6f5532" stroke-width="0.55" stroke-linecap="round" opacity="0.85"/>
<path d="M733.62 75.7L756.11 60.91" stroke="#6f5532" stroke-width="0.55" stroke-linecap="round" opacity="0.85"/>
<path d="M892.91 141.46L907.65 120.47L911.34 97.29L896.45 117.18Z" fill="#c39a59" stroke="#b98f52" stroke-width="0.4" stroke-linejoin="round"/>
<clipPath id="h35"><path d="M906.68 113.34L906.92 111.34L906.94 109.74L906.76 108.64L906.37 108.13L905.8 108.23L905.09 108.97L904.28 110.28L903.44 112.09L902.62 114.27L901.88 116.66L901.28 119.1L900.85 121.4L900.62 123.42L900.62 125L900.83 126.04L901.25 126.48L901.83 126.3L902.54 125.51L903.33 124.17L904.15 122.38L904.95 120.26L905.66 117.95L906.25 115.59Z"/></clipPath>
<path d="M906.68 113.34L906.92 111.34L906.94 109.74L906.76 108.64L906.37 108.13L905.8 108.23L905.09 108.97L904.28 110.28L903.44 112.09L902.62 114.27L901.88 116.66L901.28 119.1L900.85 121.4L900.62 123.42L900.62 125L900.83 126.04L901.25 126.48L901.83 126.3L902.54 125.51L903.33 124.17L904.15 122.38L904.95 120.26L905.66 117.95L906.25 115.59Z" fill="#8f6f3e"/>
<path clip-path="url(#h35)" d="M905.3 112.99L905.53 111L905.56 109.4L905.36 108.3L904.97 107.78L904.4 107.89L903.68 108.62L902.87 109.93L902.03 111.74L901.21 113.91L900.47 116.3L899.87 118.74L899.44 121.04L899.22 123.05L899.22 124.63L899.44 125.68L899.86 126.12L900.45 125.94L901.16 125.15L901.96 123.82L902.78 122.03L903.57 119.91L904.29 117.6L904.88 115.24Z" fill="#f0c27c"/>
<path d="M928.52 181.56L942.36 155.14L947.51 130.19L933.66 155.39Z" fill="url(#gR2)" stroke="#b98f52" stroke-width="0.4" stroke-linejoin="round"/>
<path d="M875.92 165.65L928.52 181.56L933.66 155.39L879.21 140.2Z" fill="#f1bf78" stroke="#b98f52" stroke-width="0.4" stroke-linejoin="round"/>
<path d="M783.61 137.75L827.8 151.11L829.54 126.35L784.05 113.66Z" fill="#f1bf78" stroke="#b98f52" stroke-width="0.4" stroke-linejoin="round"/>
<path d="M819.41 246.1L875.92 165.65L879.21 140.2L821.37 217.48Z" fill="url(#gR1b)" stroke="#b98f52" stroke-width="0.4" stroke-linejoin="round"/>
<path d="M763.49 224.1L819.41 246.1L821.37 217.48L763.32 196.24Z" fill="#f1bf78" stroke="#b98f52" stroke-width="0.4" stroke-linejoin="round"/>
<path d="M763.32 196.24L821.37 217.48L879.21 140.2L933.66 155.39L947.51 130.19L896.45 117.18L911.34 97.29L866.94 86.88L849.55 105.24L806.33 94.23L784.05 113.66L829.54 126.35Z" fill="#fffefb" />
<path d="M784.05 113.66L829.54 126.35" stroke="#6f5532" stroke-width="0.55" stroke-linecap="round" opacity="0.85"/>
<path d="M763.32 196.24L821.37 217.48" stroke="#6f5532" stroke-width="0.55" stroke-linecap="round" opacity="0.85"/>
<path d="M821.37 217.48L879.21 140.2" stroke="#6f5532" stroke-width="0.55" stroke-linecap="round" opacity="0.85"/>
<path d="M879.21 140.2L933.66 155.39" stroke="#6f5532" stroke-width="0.55" stroke-linecap="round" opacity="0.85"/>
<path d="M933.66 155.39L947.51 130.19" stroke="#6f5532" stroke-width="0.55" stroke-linecap="round" opacity="0.85"/>
<path d="M896.45 117.18L911.34 97.29" stroke="#6f5532" stroke-width="0.55" stroke-linecap="round" opacity="0.85"/>
<path d="M820.56 229.28L877.86 150.66" stroke="#fff6e6" stroke-width="0.5" opacity="0.9"/>
<path d="M931.91 164.3L945.76 138.67" stroke="#fff6e6" stroke-width="0.5" opacity="0.9"/>
<path d="M931.01 168.91L944.85 143.07" stroke="#fff6e6" stroke-width="0.5" opacity="0.9"/>
</g>
<g clip-path="url(#cp)" style="font-family:'Liberation Sans',Arial,sans-serif;font-style:italic;font-size:15.5px;fill:#e5b577"><text transform="matrix(0.6907 0.1797 -0.5270 0.2885 659.60 63.78)" style="font-size:15.5px">Pater</text>
<text transform="matrix(0.7033 0.1875 -0.5418 0.3010 653.11 67.98)" style="font-size:15.5px">noster,</text>
<text transform="matrix(0.6925 0.1892 -0.5667 0.3038 643.86 71.50)" style="font-size:15.5px">qui</text>
<text transform="matrix(0.7173 0.1959 -0.5567 0.3146 661.29 76.30)" style="font-size:15.5px">es</text>
<text transform="matrix(0.7504 0.1949 -0.4887 0.3220 721.62 79.63)" style="font-size:15.5px">et</text>
<text transform="matrix(0.7836 0.2035 -0.4716 0.3363 734.52 83.02)" style="font-size:15.5px">neno</text>
<text transform="matrix(0.7727 0.2066 -0.5093 0.3355 714.90 85.32)" style="font-size:15.5px">a</text>
<text transform="matrix(0.8077 0.2159 -0.4919 0.3506 724.78 88.01)" style="font-size:15.5px">malo.</text>
<text transform="matrix(0.8287 0.2276 -0.5155 0.3611 709.22 90.98)" style="font-size:15.5px">Amen.</text>
<text transform="matrix(-0.4518 0.2887 -0.6845 -0.1641 743.78 59.10)" style="font-size:16.2px">fiat</text>
<text transform="matrix(-0.5060 0.3233 -0.7085 -0.1838 732.31 66.26)" style="font-size:16.2px">voluntas</text>
<text transform="matrix(-0.5746 0.3672 -0.7350 -0.2087 698.73 87.52)" style="font-size:16.2px">tua,</text>
<text transform="matrix(-0.6331 0.4045 -0.7544 -0.2300 680.52 98.99)" style="font-size:16.2px">sicut</text>
<text transform="matrix(-0.6859 0.4383 -0.7699 -0.2492 656.15 114.42)" style="font-size:16.2px">in</text>
<text transform="matrix(-0.7520 0.4805 -0.7870 -0.2732 644.65 121.60)" style="font-size:16.2px">caelo</text>
<text transform="matrix(-0.4862 0.2999 -0.6791 -0.1672 734.41 56.75)" style="font-size:16.2px">Panem</text>
<text transform="matrix(-0.5669 0.3497 -0.7100 -0.1950 707.19 73.31)" style="font-size:16.2px">nostrum</text>
<text transform="matrix(-0.7073 0.4363 -0.7517 -0.2433 672.31 94.47)" style="font-size:16.2px">quotidianum</text>
<text transform="matrix(-0.4656 0.2772 -0.6561 -0.1563 724.57 54.62)" style="font-size:16.2px">et</text>
<text transform="matrix(-0.5071 0.3019 -0.6728 -0.1702 716.39 59.38)" style="font-size:16.2px">dimitte</text>
<text transform="matrix(-0.5730 0.3412 -0.6961 -0.1923 689.57 75.17)" style="font-size:16.2px">nobis</text>
<text transform="matrix(-0.6493 0.3866 -0.7188 -0.2180 664.69 89.79)" style="font-size:16.2px">debita</text>
<text transform="matrix(-0.7646 0.4553 -0.7462 -0.2567 629.85 110.27)" style="font-size:16.2px">nostra,</text></g>
<rect x="512.8" y="1.2" width="56" height="10.9" fill="#7da0ee"/>
<text x="517" y="9.2" style="font-family:'Liberation Sans',sans-serif;font-size:8.6px;font-weight:bold;fill:#1b2240" textLength="41" lengthAdjust="spacingAndGlyphs">Perspective</text>
<path d="M562.4 2.7V11.1" stroke="#39456e" stroke-width="0.8"/>
<path d="M563.6 5.8H567.6L565.6 8.2Z" fill="#1b2240"/></svg>

</body></html>
